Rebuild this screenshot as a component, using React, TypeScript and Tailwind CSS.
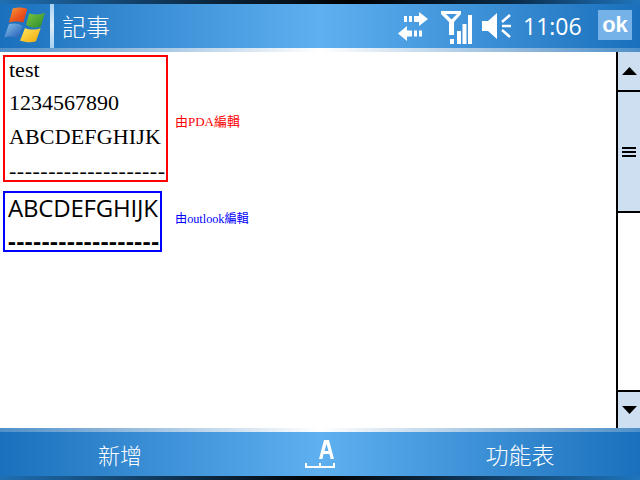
const serif = "font-['Liberation_Serif','Noto_Sans_CJK_TC',serif]";

function Logo() {
  return (
    <svg width="50" height="44" viewBox="0 0 50 44" className="shrink-0">
      <defs>
        <linearGradient id="lr" x1="0" y1="0" x2="1" y2="1"><stop offset="0" stopColor="#f6a040" /><stop offset="0.5" stopColor="#ee5a1e" /><stop offset="1" stopColor="#d8341a" /></linearGradient>
        <linearGradient id="lg" x1="0" y1="0" x2="1" y2="1"><stop offset="0" stopColor="#7cc840" /><stop offset="1" stopColor="#2c8a2a" /></linearGradient>
        <linearGradient id="lb" x1="0" y1="0" x2="1" y2="1"><stop offset="0" stopColor="#8cc4ee" /><stop offset="1" stopColor="#1a56b0" /></linearGradient>
        <linearGradient id="ly" x1="0" y1="0" x2="1" y2="1"><stop offset="0" stopColor="#ffe860" /><stop offset="1" stopColor="#f0a808" /></linearGradient>
      </defs>
      <path d="M12.7 4.5 C17 3 23 3 27.3 5 L23.3 18.5 C19 17 13 17 9 18.5 Z" fill="url(#lr)" />
      <path d="M29.3 9.3 C33 11 41 11 45 8.5 L40.7 22.7 C36 24 31 24 26 20.7 Z" fill="url(#lg)" />
      <path d="M9 20 C13 19 19 19 22.7 22 L18.3 34.3 C14 32 8 32 4.3 33.3 Z" fill="url(#lb)" />
      <path d="M25 24 C29 26 37 26 40.7 24 L36 37.3 C31 39 25 38 20 36.7 Z" fill="url(#ly)" />
    </svg>
  );
}

function Sync() {
  return (
    <svg width="30" height="29" viewBox="0 0 30 29" fill="white" className="shrink-0">
      <path d="M21 0 L30 7 L21 14 V10 H16 V4 H21 Z" />
      <rect x="6" y="4" width="3" height="6" /><rect x="11" y="4" width="3" height="6" />
      <path d="M9 14 L0 21.5 L9 29 V24.5 H14 V18.5 H9 Z" />
      <rect x="16" y="18.5" width="3" height="6" /><rect x="21" y="18.5" width="3" height="6" />
    </svg>
  );
}

function Signal() {
  return (
    <svg width="31" height="33" viewBox="0 0 31 33" fill="white" className="shrink-0">
      <path d="M0 0 H20 V3 L13 11 V24 H8 V11 L0 3 Z M5 3 L10 8 H11 L16 3 Z" fillRule="evenodd" />
      <rect x="9" y="28" width="4" height="5" />
      <rect x="16" y="20" width="4" height="13" />
      <rect x="21.5" y="13" width="4" height="20" />
      <rect x="27" y="4" width="4" height="29" />
    </svg>
  );
}

function Speaker() {
  return (
    <svg width="30" height="26" viewBox="0 0 30 26" fill="white" className="shrink-0">
      <path d="M0 8 H6 L15 0 V26 L6 18 H0 Z" />
      <path d="M20 9 L28 2 M20 13 H29 M20 17 L28 24" stroke="white" strokeWidth="2.5" fill="none" />
    </svg>
  );
}

function ScrollArrow({ up }: { up: boolean }) {
  return (
    <svg width="15" height="8" viewBox="0 0 15 8" fill="black">
      <path d={up ? "M7.5 0 L15 8 H0 Z" : "M0 0 H15 L7.5 8 Z"} />
    </svg>
  );
}

export default function App() {
  return (
    <div className="w-[640px] h-[480px] flex flex-col overflow-hidden bg-white">
      <div className="h-1 shrink-0 bg-[linear-gradient(90deg,#1f6fb2_0%,#0a2238_35%,#000000_55%,#0a2a48_80%,#1f75bc_100%)]" />
      <header className="h-11 shrink-0 flex items-center bg-[linear-gradient(90deg,#1a70bc_0%,#5eb0f0_50%,#1a70bc_100%)]">
        <Logo />
        <div className="w-[4px] h-11 shrink-0 bg-[linear-gradient(180deg,#a8d0f0,#dcecf8,#a8d0f0)]" />
        <div className="ml-[8px] text-[24px] leading-none text-white font-['Noto_Sans_CJK_TC',sans-serif] font-light">記事</div>
        <div className="ml-auto flex items-center">
          <Sync />
          <div className="ml-[13px] mt-[2px]"><Signal /></div>
          <div className="ml-[10px]"><Speaker /></div>
          <div className="ml-[11px] w-[62px] text-[23px] leading-none text-white font-['Open_Sans',sans-serif]">11:06</div>
          <div className="ml-[13px] mr-[8px] mb-[2px] w-[34px] h-[30px] flex items-center justify-center bg-[#74b2e8] text-white font-bold text-[22px] leading-none font-['Liberation_Sans',sans-serif]">ok</div>
        </div>
      </header>
      <div className="h-1 shrink-0 bg-[linear-gradient(90deg,#4f8fc8_0%,#ffffff_50%,#4f8fc8_100%)]" />

      <main className="flex-1 flex min-h-0">
        <div className="flex-1 pl-[3px] pt-[3px] flex flex-col">
          <div className="flex items-center">
            <div className={`w-[165px] h-[127px] border-2 border-[#ff0000] pl-[4px] text-black text-[22px] leading-[33px] whitespace-nowrap ${serif}`}>
              <div className="-mt-[4px]">test</div>
              <div>1234567890</div>
              <div className="mt-[1px] tracking-[0.15px]">ABCDEFGHIJK</div>
              <div className="mt-[9px] leading-[17px] tracking-[0.5px]">--------------------</div>
            </div>
            <div className={`ml-[7px] mt-[6px] text-[13px] text-[#ff0000] ${serif}`}>由PDA編輯</div>
          </div>
          <div className="flex items-center mt-[9px]">
            <div className="w-[159px] h-[61px] border-2 border-[#0000ff] pl-[3px] text-black text-[24px] leading-[30px] whitespace-nowrap font-['Open_Sans',sans-serif]">
              <div className="tracking-[-0.2px] font-medium">ABCDEFGHIJK</div>
              <div className="font-bold leading-[18px] tracking-[0.7px] mt-[9px]">------------------</div>
            </div>
            <div className={`ml-[13px] -mt-[4px] text-[12.2px] text-[#0000ff] ${serif}`}>由outlook編輯</div>
          </div>
        </div>

        <aside className="w-6 shrink-0 border-l-2 border-black flex flex-col">
          <div className="h-[40px] bg-[#cddff0] flex items-center justify-center border-b-2 border-black"><ScrollArrow up /></div>
          <div className="h-[121px] bg-[#cddff0] flex flex-col gap-[2px] items-center justify-center border-b-2 border-black">
            <div className="w-[14px] h-[2px] bg-black" />
            <div className="w-[14px] h-[2px] bg-black" />
            <div className="w-[14px] h-[2px] bg-black" />
          </div>
          <div className="flex-1" />
          <div className="h-[38px] bg-[#cddff0] flex items-center justify-center border-t-2 border-black"><ScrollArrow up={false} /></div>
        </aside>
      </main>

      <div className="h-1 shrink-0 bg-[linear-gradient(90deg,#4f8fc8_0%,#ffffff_50%,#4f8fc8_100%)]" />
      <footer className="h-11 shrink-0 grid grid-cols-[240px_160px_240px] items-center bg-[linear-gradient(90deg,#1a70bc_0%,#5eb0f0_50%,#1a70bc_100%)] text-white leading-none font-['Noto_Sans_CJK_TC',sans-serif] font-light">
        <div className="text-center text-[22px]">新增</div>
        <div className="flex justify-center">
          <svg width="30" height="28" viewBox="0 0 30 28" fill="white">
            <path d="M19 0 H24 L29 19 H25.5 L24.5 14 H18.5 L17.5 19 H14 Z M19.5 11 H23.5 L21.5 4 Z" fillRule="evenodd" />
            <path d="M0 23 H2 V26 H14 V23 H16 V26 H28 V23 H30 V28 H0 Z" />
          </svg>
        </div>
        <div className="text-center text-[23px]">功能表</div>
      </footer>
      <div className="h-1 shrink-0 bg-[linear-gradient(90deg,#1f6fb2_0%,#0a2238_35%,#000000_50%,#0a2238_65%,#1f75bc_100%)]" />
    </div>
  );
}
